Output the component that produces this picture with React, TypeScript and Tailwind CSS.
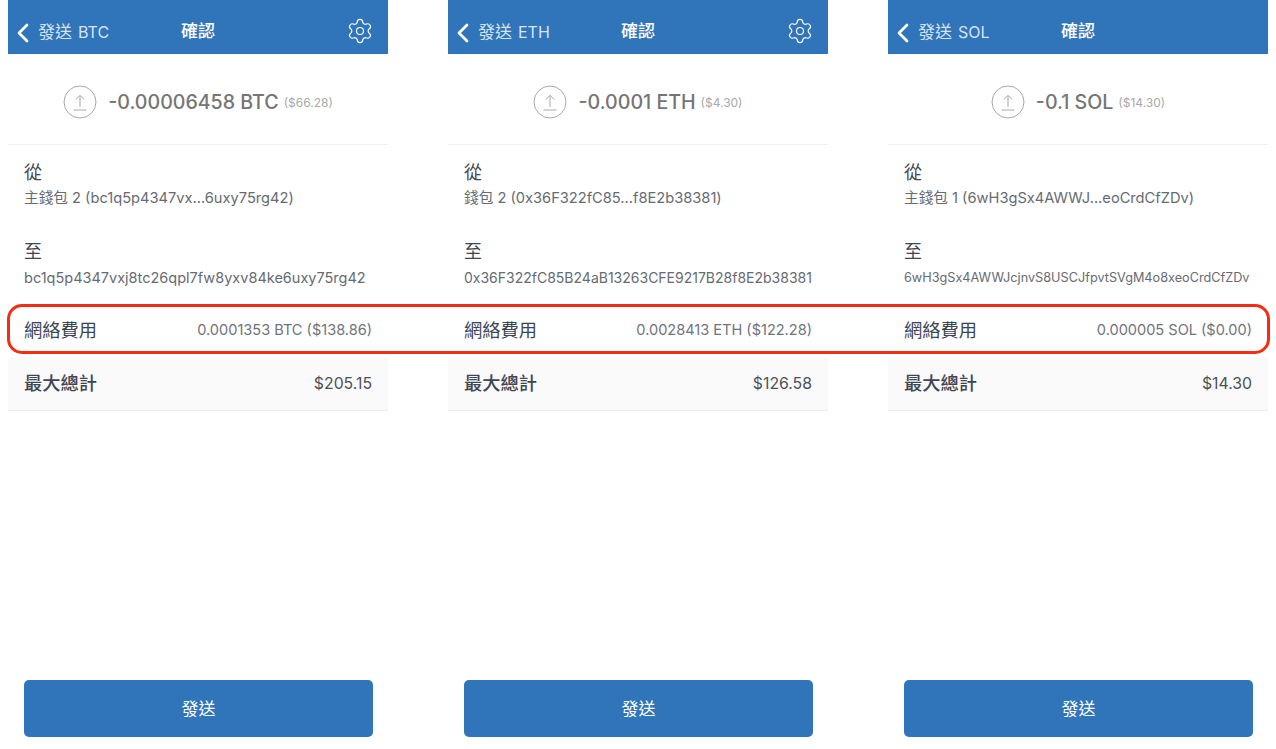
import React from 'react';
import { ChevronLeft, Settings } from 'lucide-react';

interface Phone {
    coin: string;
    gear: boolean;
    amount: string;
    usd: string;
    fromText: string;
    toText: string;
    toSize: string;
    fee: string;
    total: string;
}

const phones: Phone[] = [
    {
        coin: 'BTC',
        gear: true,
        amount: '-0.00006458 BTC',
        usd: '($66.28)',
        fromText: '主錢包 2 (bc1q5p4347vx...6uxy75rg42)',
        toText: 'bc1q5p4347vxj8tc26qpl7fw8yxv84ke6uxy75rg42',
        toSize: 'text-[14.5px]',
        fee: '0.0001353 BTC ($138.86)',
        total: '$205.15',
    },
    {
        coin: 'ETH',
        gear: true,
        amount: '-0.0001 ETH',
        usd: '($4.30)',
        fromText: '錢包 2 (0x36F322fC85...f8E2b38381)',
        toText: '0x36F322fC85B24aB13263CFE9217B28f8E2b38381',
        toSize: 'text-[14px]',
        fee: '0.0028413 ETH ($122.28)',
        total: '$126.58',
    },
    {
        coin: 'SOL',
        gear: false,
        amount: '-0.1 SOL',
        usd: '($14.30)',
        fromText: '主錢包 1 (6wH3gSx4AWWJ...eoCrdCfZDv)',
        toText: '6wH3gSx4AWWJcjnvS8USCJfpvtSVgM4o8xeoCrdCfZDv',
        toSize: 'text-[12.7px]',
        fee: '0.000005 SOL ($0.00)',
        total: '$14.30',
    },
];

const PhoneColumn: React.FC<{ phone: Phone }> = ({ phone }) => (
    <div className="w-[380px] h-full flex flex-col">
        {/* Header */}
        <div className="h-[54px] shrink-0 bg-[#3074ba] flex items-center text-white pt-[11px] relative">
            <div className="flex items-center text-[#d5e3f1] text-[17px]">
                <ChevronLeft className="-ml-[1px] w-[32px] h-[32px] text-white" strokeWidth={2} />
                <span className="-ml-[1px]">發送</span>
                <span className="ml-[6px] text-[16px] mb-[2px]">{phone.coin}</span>
            </div>
            <div className="absolute left-[173px] top-[19px] text-[17px] font-medium leading-[24px]">確認</div>
            {phone.gear && (
                <Settings className="absolute right-[14px] top-[17px] w-[28px] h-[28px] text-white" strokeWidth={1} />
            )}
        </div>

        {/* Amount */}
        <div className="h-[91px] shrink-0 border-b border-[#f2f2f2] flex items-center justify-center pt-[6px]">
            <svg viewBox="0 0 34 34" className="w-[34px] h-[34px] text-[#a8a8a8]" fill="none" stroke="currentColor" strokeWidth="1">
                <circle cx="17" cy="17" r="16" />
                <path d="M17 22V10.5M12.8 14.5 17 10.3l4.2 4.2M10.5 25h13" />
            </svg>
            <span className="ml-[11px] mt-[2px] text-[19.6px] font-medium text-[#757575]">{phone.amount}</span>
            <span className="ml-[5px] text-[12px] text-[#a9a9a9] mt-[1px]">{phone.usd}</span>
        </div>

        {/* From / to */}
        <div className="px-[16px] pt-[15px] text-[#3e4652]">
            <div className="text-[18px] leading-[25px]">從</div>
            <div className="text-[14.65px] leading-[22px] text-[#666b72] mt-[2px] whitespace-nowrap">{phone.fromText}</div>
            <div className="text-[18px] leading-[25px] mt-[30px]">至</div>
            <div className={`${phone.toSize} leading-[22px] text-[#666b72] mt-[3px] whitespace-nowrap`}>{phone.toText}</div>
        </div>

        {/* Fee */}
        <div className="mt-[11px] h-[57px] shrink-0 flex items-center justify-between px-[16px] pt-[4px]">
            <span className="text-[18.25px] text-[#3e4652]">網絡費用</span>
            <span className="text-[14.55px] text-[#6f747a]">{phone.fee}</span>
        </div>

        {/* Total */}
        <div className="h-[54px] shrink-0 bg-[#fafafa] border-b border-[#ececec] flex items-center justify-between px-[16px] pt-[1px]">
            <span className="text-[18.25px] font-medium text-[#3e4652]">最大總計</span>
            <span className="text-[15.8px] text-[#4c5158]">{phone.total}</span>
        </div>

        {/* Send */}
        <div className="mt-auto pl-[16px] pr-[15px] pb-[12px]">
            <div className="h-[57px] rounded-[5px] bg-[#3074ba] flex items-center justify-center text-white text-[17px] pt-[2px]">發送</div>
        </div>
    </div>
);

export default function App() {
    return (
        <div
            className="relative w-[1276px] h-[749px] bg-white overflow-hidden flex gap-[60px] pl-[8px] font-['Inter','Noto_Sans_CJK_TC',sans-serif]"
        >
            {phones.map(phone => (
                <PhoneColumn key={phone.coin} phone={phone} />
            ))}
            {/* Highlight around the fee row */}
            <div className="absolute left-[7px] top-[304px] w-[1263px] h-[50px] rounded-[15px] border-[3px] border-[#f52c11]" />
        </div>
    );
}
